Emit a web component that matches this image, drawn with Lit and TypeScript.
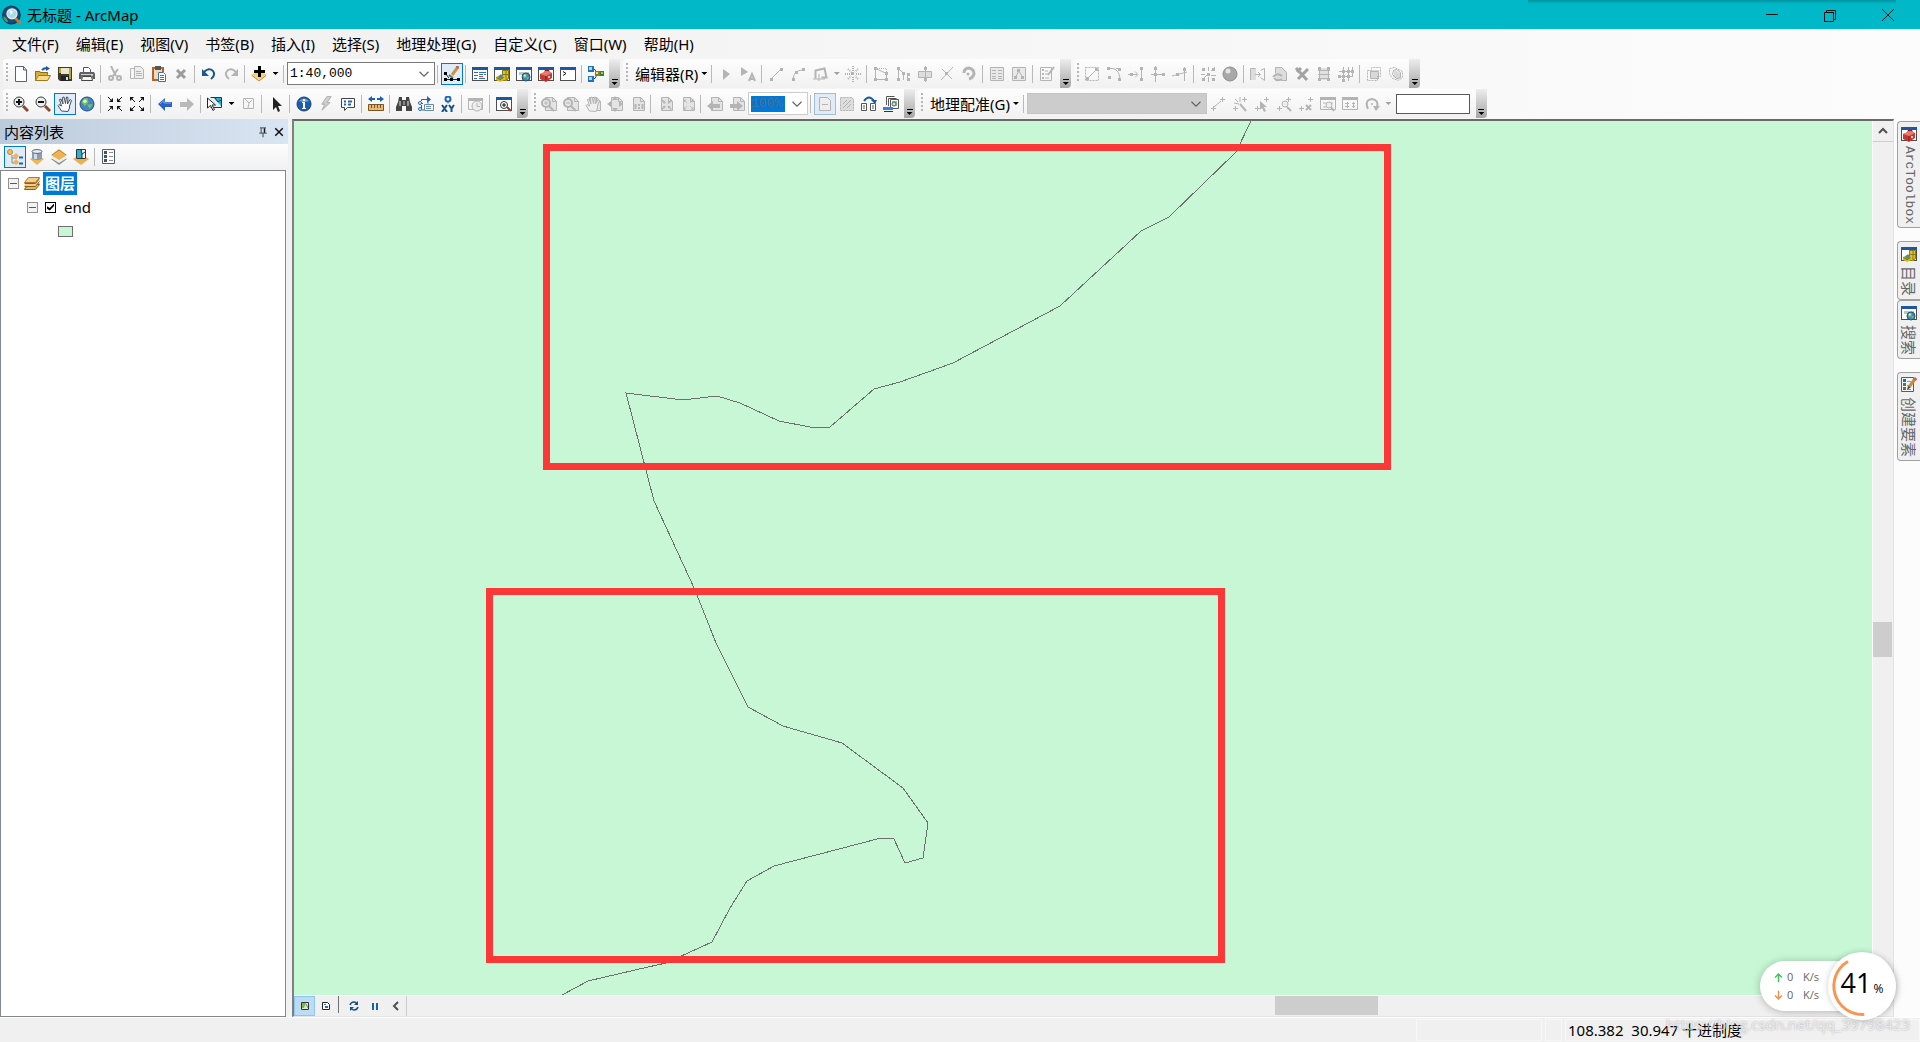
import { LitElement, html, svg, css, nothing } from "lit";
import { customElement, state } from "lit/decorators.js";
import { classMap } from "lit/directives/class-map.js";

/* ---------- icon drawing helpers ---------- */

const line = (d: string, color = "currentColor", width = 1) =>
  svg`<path d=${d} fill="none" stroke=${color} stroke-width=${width}></path>`;
const fill = (d: string, color = "currentColor") => svg`<path d=${d} fill=${color}></path>`;
const disc = (cx: number, cy: number, r: number, color = "currentColor", edge = "none", width = 1) =>
  svg`<circle cx=${cx} cy=${cy} r=${r} fill=${color} stroke=${edge} stroke-width=${width}></circle>`;
const nodes = (...pts: [number, number][]) =>
  fill(pts.map(([x, y]) => `M${x - 1} ${y - 1}h3v3h-3z`).join(""));
const frame = svg`${fill("M0 1h16v14H0z", "#4d4d4d")}${fill("M1 4h14v10H1z", "#fff")}${fill("M0 1h16v3H0z", "#1f55a5")}`;
const page = svg`${fill("M4 1h8l4 4v10H4z", "#e4e4e4")}${line("M4.5 1.5h7l4 4v9h-11zM11.5 1.5v4h4")}`;
const globe = (cx: number, cy: number, r: number) => svg`
  ${disc(cx, cy, r, "#3f86cf", "#1d4f7d")}
  ${fill(`M${cx - r * 0.8} ${cy - r * 0.2}q${r * 0.4} ${-r * 0.8} ${r * 0.9} ${-r * 0.6}l${r * 0.1} ${r * 0.6}l${-r * 0.5} ${r * 0.5}zM${cx} ${cy + r * 0.1}l${r * 0.8} ${-r * 0.1}l${-r * 0.4} ${r * 0.7}z`, "#7fc24a")}
  ${disc(cx - r * 0.3, cy - r * 0.4, r * 0.25, "#d8efd8")}`;
const toolbox = svg`${line("M7 6V4.5h4V6", "#8a1c16")}${fill("M2 8l7-3 5 2v5l-6 4-6-3z", "#c43a32")}${fill("M2 8l7-3 5 2-6 3z", "#e87a70")}${line("M8 10v5", "#8a1c16")}${fill("M10 10h2v2h-2z", "#f0c8c4")}`;
const cabinet = svg`${fill("M8 4h7v9l-3 2H8z", "#dcc32a")}${line("M8.5 4.5h6v8l-3 2h-3zM9 8.5h5M12 5v9", "#8d7a12")}${fill("M2 11l4-2 4 2v3l-4 2-4-2z", "#d2b81f")}${fill("M4 11l3-3 2 3-3 2z", "#3e8ab5")}${line("M2.5 11.5l3.5 2 3.5-2", "#7e6b08")}`;
const magnifier = (plus: boolean) => svg`
  ${line("M10 10l5 5", "#8a4a35", 3)}${disc(6, 6, 5, "#e9eef0", "#3d3d3d")}
  ${fill(plus ? "M5 3h2v2h2v2H7v2H5V7H3V5h2z" : "M3 5h6v2H3z", "#111")}`;
const grayLens = (plus: boolean) =>
  svg`${page}${disc(5, 7, 4, "#e8e8e8", "currentColor", 2)}${line("M8 10l5 5", "currentColor", 2)}${line(plus ? "M3 7h4M5 5v4" : "M3 7h4")}`;
const hand =
  "M4.5 15L1 9.5 2 8.5 4.5 10 2.5 3.5 4 3 6 8 5.5 1.5 7 1 8.5 7.5 9.5 1 11 1.5 10.5 8 13 3.5 14.5 4.5 12.5 10 12.5 12 11 15.5z";
const corners = "M1 1l5 5M15 1l-5 5M1 15l5-5M15 15l-5-5";
const inHeads = "M6 2v4H2zM10 2v4h4zM6 14v-4H2zM10 14v-4h4z";
const outHeads = "M1 1v4l4-4zM15 1v4l-4-4zM1 15v-4l4 4zM15 15v-4l-4 4z";
const pencil = svg`${line("M8 10l6-8", "#c58a3c", 3)}${line("M13.5 3l1.5-2", "#c9616b", 3)}${fill("M6 13l1-4 2.5 1.5z", "#444")}`;
const twoCrosses = "M1 12.5h5M3.5 10v5M10 3.5h5M12.5 1v5";

const icons: Record<string, unknown> = {
  create: svg`${fill("M2 0h9l3 4v12H2z", "#fdfeff")}${line("M2.5.5h8l3 3.5v11.5h-11zM10.5.5v3.5h3", "#56627a")}`,
  open: svg`${fill("M0 5h5l1 1h7v9H0z", "#d9a93b")}${line("M.5 14.5v-9h4l1 1h7v2", "#8c6a17")}${fill("M3 9h13l-3 6H0z", "#f7dc85")}${line("M3.5 9.5h12l-3 5H.5z", "#9c7820")}${line("M7 4q2-2 5-2", "#1f5d99", 2)}${fill("M11 0l4 2.5L11 5z", "#1f5d99")}`,
  save: svg`${fill("M1 1h14v14H3l-2-2z", "#3d3b28")}${fill("M2 2h2v5H2zM12 2h2v11h-2z", "#b5a642")}${fill("M4 2h8v6H4z", "#e9e6d0")}${fill("M4 10h8v5H4z", "#222")}${fill("M9 11h2v3H9z", "#ddd")}`,
  print: svg`${fill("M4 1h6l2 2v4H4z", "#fff")}${line("M4.5 7V1.5h5l2 2V7", "#555")}${fill("M1 6h14l1 2v5H0V8z", "#5d6165")}${fill("M2 8h12v1H2z", "#cfd3d6")}${fill("M3 10h10l1 5H2z", "#f6f6ee")}${line("M3.5 10.5h9l1 4h-11z", "#444")}${fill("M12 9h2v1h-2z", "#b7cf3a")}`,
  cut: svg`${line("M4 0l5 10M11 3L6 10", "currentColor", 2)}${disc(4, 12, 2, "none", "currentColor", 2)}${disc(12, 12, 2, "none", "currentColor", 2)}`,
  copy: svg`${line("M1.5 2.5h7l2 2v8h-9z")}${fill("M5 0h7l3 3v10H5z", "#eee")}${line("M5.5.5h6l3 3v9h-9zM7 5.5h5M7 7.5h6M7 9.5h6")}`,
  paste: svg`${fill("M1 1h12v14H1z", "#b5642f")}${fill("M3 3h8v10H3z", "#f3d9b5")}${fill("M4 0h6v4H4z", "#555")}${fill("M7 6h6l2 2v8H7z", "#fff")}${line("M7.5 6.5h5l2 2v7h-7zM9 9.5h4M9 11.5h4M9 13.5h4", "#3872b2")}`,
  remove: line("M4 4l8 8M12 4l-8 8", "#9c9c9c", 3),
  undo: svg`${line("M3 6q5-5 9-1 3 4-2 8", "#1c5795", 2)}${fill("M1 3v7h7z", "#1c5795")}`,
  redo: svg`${line("M13 6Q8 1 4 5q-3 4 2 8", "currentColor", 2)}${fill("M15 3v7H8z")}`,
  add: svg`${fill("M8 3l8 6-8 6-8-6z", "#f7cf85")}${line("M1 9.5l7 5.5 7-5.5", "#c48e3c")}${fill("M7 0h3v4h4v3h-4v4H7V7H3V4h4z", "#000")}`,
  editor: svg`${line("M1 13.5h14M1 7l4 5", "#222")}${line("M5 9l4 3", "#4d8076", 2)}${fill("M0 6h3v3H0zM0 12h3v3H0zM6 12h3v3H6zM13 12h3v3h-3z", "#000")}${line("M8 9l6-8", "#d29243", 3)}${line("M13 2l1-2", "#c45e66", 3)}`,
  toc: svg`${frame}${line("M2 6.5h4M2 9.5h4M2 12.5h3M7 6.5h7M7 8.5h4M7 12.5h6", "#2b6fbd")}${line("M7 10.5h4", "#d23c2a")}${line("M12 8.5h2", "#2f9a45")}`,
  catalog: svg`${frame}${cabinet}`,
  search: svg`${frame}${fill("M3 6h10v3H3z", "#b9c4d6")}${globe(10, 11, 4)}`,
  toolbox: svg`${frame}${toolbox}`,
  python: svg`${frame}${line("M3 5.5l3 2-3 2", "#111")}`,
  model: svg`${line("M5 3.5h2l2 4M5 12.5h2l2-4", "#1f5d99")}${line("M9 8h3", "#444")}${fill("M0 0h6v6H0zM0 10h6v6H0z", "#2272b8")}${fill("M1 1h3v3H1zM1 11h3v3H1z", "#a8d8f5")}${fill("M7 5h5v5H7z", "#927b1c")}${fill("M8 6h2v2H8z", "#f2de68")}${fill("M12 5h4v5h-4z", "#3c7f2b")}${fill("M13 6h2v2h-2z", "#8ed16d")}`,
  pointer: fill("M5 3v11l7-6z"),
  pointerA: svg`${fill("M1 1v9l7-4z")}${line("M9 15l3-7 3 7M10 13h4", "currentColor", 2)}`,
  segment: svg`${line("M3 13L13 3")}${nodes([3, 13], [13, 3])}`,
  arc: svg`${line("M3 13Q4 4 13 4")}${nodes([3, 13], [6, 6], [13, 3])}`,
  trace: svg`${line("M3.5 12.5v-8l9-2 2 9h-5", "currentColor", 2)}${line("M1 13h12M7 8v7")}`,
  burst: svg`<g stroke-dasharray="1 1">${line("M8 0v6M8 11v5M0 8h6M11 8h5M3 3l3 3M13 3l-3 3M3 13l3-3M13 13l-3-3", "currentColor", 2)}</g>${nodes([7, 7])}`,
  edges: svg`${line("M2.5 2.5v11h11v-6z")}<g stroke-dasharray="1 1">${line("M4 2.5h9.5v5")}</g>${nodes([2, 2], [13, 7], [2, 13], [13, 13])}`,
  reshape: svg`${line("M3.5 2v13M3.5 3l5 4v7M12.5 8v7")}${nodes([3, 13], [3, 2], [8, 7], [13, 8], [13, 13])}`,
  split: svg`${fill("M1 5h14v7H1z", "#dedede")}${line("M1.5 5.5h13v6h-13zM8.5 0v16")}${nodes([8, 2], [8, 13])}`,
  cross: svg`${line("M2 14L14 1M3 3l10 10")}${nodes([7, 7])}`,
  rotate: svg`${line("M3 7q0-5 5-5 5 1 5 6-1 4-5 5", "currentColor", 3)}${disc(7, 8, 1.5)}`,
  table: svg`${fill("M2 1h12v14H2z", "#e9e9e9")}${line("M1.5 1.5h13v13h-13zM3 4.5h4M9 4.5h4M3 7.5h4M9 7.5h4M3 10.5h4M9 10.5h4M3 12.5h4M9 12.5h4")}`,
  sketch: svg`${fill("M2 1h12v14H2z", "#e9e9e9")}${line("M1.5 1.5h13v13h-13zM4 12l4-7 4 7")}${nodes([4, 11], [7, 4], [11, 11])}`,
  template: svg`${line("M1.5 1.5h11v13h-11zM6 5h3M6 8h3M6 12h4")}${fill("M3 3h2v2H3zM3 7h2v2H3zM3 11h2v2H3z")}${line("M9 9l6-8", "currentColor", 2)}`,
  topoA: svg`<path d="M1.5 1.5h13v13h-13z" fill="none" stroke="currentColor" stroke-dasharray="2 1"></path>${line("M4 12l8-8")}${nodes([3, 12], [12, 3])}`,
  topoB: svg`${line("M1 2.5h6q7 2 7 12M10 2.5h5")}${nodes([2, 2], [13, 3], [13, 13], [3, 11])}`,
  topoC: svg`${line("M0 8.5h9M13.5 1v14M7 5.5l3 3-3 3")}${nodes([3, 8], [13, 2], [13, 13])}`,
  topoD: svg`${line("M5.5 0v16M1 8.5h14")}${nodes([5, 8], [5, 2], [13, 8])}`,
  topoE: svg`${line("M0 10L15 6M12.5 1v14")}${nodes([5, 8], [12, 3])}`,
  explode: svg`${line("M8.5 1v4M1 8.5h4M11 9.5h5M8.5 11v5M3 13l5-5M11 5l4-4")}${nodes([3, 3], [8, 8], [13, 13], [13, 3], [3, 13])}`,
  ball: svg`${disc(8, 8, 7, "#a8a8a8", "#8f8f8f")}${disc(6, 5, 2.5, "#e4e4e4")}`,
  align: svg`${fill("M1 2h5v12H1z", "#ddd")}${line("M.5 14V2.5h5M5 8.5h5M8 6l2.5 2.5L8 11M10.5 4.5l4-2v12l-4-3")}`,
  replace: svg`${fill("M3 1h7l5 5v9H3z", "#ddd")}${line("M3.5 7V1.5h6l5 5v8h-5")}${line("M1 11q4-5 9-1M10 13q-5 3-8-1", "currentColor", 2)}`,
  fixtool: svg`${line("M2 2l11 12M4 13L14 3M3 6l4-4", "#a2a2a2", 3)}`,
  box: svg`${fill("M3 2h10v12H3z", "#e0e0e0")}${line("M3.5 1v14M12.5 1v14M2 4.5h12M2 8.5h12M2 12.5h12")}${nodes([3, 2], [12, 2], [3, 13], [12, 13])}`,
  grid: svg`${line("M5.5 1v14M10.5 1v14M14.5 1v10M1 5.5h14M1 10.5h14")}${nodes([5, 5], [10, 5], [14, 5], [1, 10], [5, 10], [10, 10], [5, 14])}`,
  mergeA: svg`${fill("M4 4h9v9H4z", "#d8d8d8")}<path d="M1.5 4.5h4v-3h9v9h-3v4h-10z" fill="none" stroke="currentColor" stroke-dasharray="2 1"></path>${line("M4.5 5.5h8v7h-8z")}`,
  mergeB: svg`${fill("M7 4l6 4-2 6-6-3z", "#d8d8d8")}<path d="M1.5 2.5l5-1 8 4v6l-4 3-6-2-3-5z" fill="none" stroke="currentColor" stroke-dasharray="2 1"></path>${line("M5.5 4.5l3-1 4 3v5l-4 1-4-4z")}`,

  zoomin: magnifier(true),
  zoomout: magnifier(false),
  hand: svg`${fill(hand, "#fff")}${line(hand, "#44505c")}`,
  globe: globe(8, 8, 7),
  fixin: svg`${line(corners, "#111")}${fill(inHeads, "#111")}`,
  fixout: svg`${line(corners, "#111")}${fill(outHeads, "#111")}`,
  back: svg`${fill("M1 8l7-6v4h7v5H8v4z", "#2b63c4")}${line("M3 8l4-3.5V7h7", "#7fa9ea")}`,
  forward: fill("M15 8L8 2v4H1v5h7v4z", "#b9b9b9"),
  select: svg`${fill("M3 2h12v10H3z", "#e4eef0")}${line("M3.5 1.5h11v10h-11", "#333")}${fill("M7 2h7v8z", "#28b5d6")}${line("M8 2l3 4 3-2", "#333")}${fill("M0 1v12l3-3 3 5 2-1-3-5h4z", "#fff")}${line("M.5 2v10l3-2.5 2.5 5 1.5-1-2.5-4.5h3.5z", "#222")}`,
  clear: svg`${line("M3.5 2.5h10v10h-10zM5 3l4 4 3-3M9 7l-1 5")}`,
  arrow: fill("M5 1v13l3-3 2 5 2-1-2-5h4z", "#222"),
  info: svg`${disc(8, 8, 7, "#1d5fae", "#13427d")}${fill("M3 5q5-5 10 0-5 2-10 0z", "#6fa4e0")}${fill("M7 3h2v2H7zM6 6h3v6h1v1H6v-1h1V7H6z", "#fff")}`,
  bolt: svg`${fill("M9 0h5l-4 6h3L3 16l3-7H3z", "#cfcfcf")}${line("M9 .5h4l-4 6h3L4 14l3-6H4z")}`,
  popup: svg`${fill("M1 2h14v9H8l-3 4v-4H1z", "#fff")}${line("M1.5 2.5h13v9h-7l-3 3v-3h-3z", "#444")}${line("M4 5.5h2M4 8.5h2M8 5.5h4M8 8.5h3", "#1f66b0", 2)}`,
  measure: svg`${fill("M0 3l4-3v2h3v2H4v2zM16 3l-4-3v2H9v2h3v2z", "#1d5fa8")}${fill("M0 8h16v7H0z", "#e0b87a")}${line("M.5 8.5h15v6H.5zM3.5 9v3M6.5 9v3M9.5 9v3M12.5 9v3", "#7d5522")}`,
  find: svg`${fill("M3 1h3v3h4V1h3l1 5 2 5v4h-6v-5H6v5H0v-4l2-5z", "#444")}${fill("M3 5h2v5H3zM11 5h2v5h-2z", "#999")}${fill("M7 5h2v4H7z", "#888")}`,
  route: svg`${line("M2 7.5h3M3.5 5V3.5h6M3.5 9v5h3", "#1f66b0")}${fill("M9 0l4 3.5L9 7z", "#1f66b0")}${disc(2, 7, 1.5, "#fff", "#1f66b0")}${disc(2, 13, 1.5, "#fff", "#1f66b0")}${fill("M6 8h10v7H6z", "#eef5fb")}${line("M6.5 8.5h9v6h-9zM10 6v2M8 10.5h5M8 12.5h5", "#6b8bab")}`,
  xy: svg`${disc(8, 3, 2.5, "#fff", "#1f66b0", 2)}${line("M8 5.5v2", "#1f66b0")}${line("M2 9l5 7M7 9l-5 7M9 9l2.5 3.5L14 9M11.5 12v4", "#174f8c", 2)}`,
  time: svg`${line("M.5 3.5h14v10H.5z")}${fill("M0 2h15v3H0z")}${disc(9, 10, 5, "#eee", "currentColor")}${line("M9 7v3.5h3")}`,
  viewer: svg`${frame}${line("M11 11l4 4", "#8a4a35", 2)}${disc(8, 9, 3.5, "#fff", "#333")}${line("M6 9h4M8 7v4", "#111")}`,

  pgin: grayLens(true),
  pgout: grayLens(false),
  pghand: svg`${page}${fill(hand, "#eee")}${line(hand)}`,
  pgfull: svg`${page}${fill("M8 0l3 4H5zM8 16l3-4H5zM0 8l4-3v6zM16 8l-4-3v6z")}`,
  pgone: svg`${page}${line("M6.5 8v5M13.5 8v5", "currentColor", 2)}${fill("M9 8h2v2H9zM9 11h2v2H9z")}`,
  pgfixin: svg`${page}<g transform="translate(4 3) scale(.7)">${line(corners, "currentColor", 2)}${fill(inHeads)}</g>`,
  pgfixout: svg`${page}<g transform="translate(4 3) scale(.7)">${line(corners)}${fill(outHeads)}</g>`,
  pgback: svg`${page}${fill("M0 10l6-5v3h7v4H6v3z")}`,
  pgnext: svg`${page}${fill("M14 10L8 5v3H1v4h7v3z")}`,
  pgdraft: svg`${fill("M2 1h9l3 3v11H2z", "#eee")}${line("M2.5 1.5h8l3 3v10h-11zM5 8.5h6")}`,
  pgfocus: svg`${fill("M1 1h12l2 2v12H1z", "#ddd")}<path d="M1.5 1.5h11l2 2v11h-13z" fill="none" stroke="currentColor" stroke-dasharray="2 1"></path>${line("M4 12l8-8M4 8l4-4M8 12l4-4")}`,
  pgchange: svg`${line("M3 5q5-7 10 0", "#1f5d99", 2)}${fill("M10 4h6l-2 4z", "#1f5d99")}${fill("M0 7h6v8H0zM9 7h6v8H9z", "#fff")}${line("M.5 7.5h5v7h-5zM9.5 7.5h5v7h-5zM2 10h2M11 10h2M2 12h2M11 12h2", "#555")}`,
  pgdriven: svg`${fill("M4 0h9v9H4z", "#fff")}${line("M3.5 9V.5h8M5.5 10V2.5h8M7.5 3.5h8v9h-8z", "#555")}${fill("M9 5h5v5H9z", "#90b880")}${disc(11, 8, 2, "#ddd", "#4b6b84")}${fill("M0 11h10v3H0z", "#3b82d0")}${line("M1 15.5h9", "#333")}`,

  ctlA: svg`${line(twoCrosses)}${line("M4 11l7-6")}`,
  ctlB: svg`${line(twoCrosses)}${line("M8 8l6 7", "currentColor", 2)}${line("M3 3l3 3M8 1v5M2 7l5 1")}`,
  ctlC: svg`${line(twoCrosses)}${fill("M6 5v9l2-2 2 4 2-1-2-4h3z")}`,
  ctlD: svg`${line(twoCrosses)}${disc(9, 8, 3, "#eee", "currentColor")}${line("M11 11l4 4", "currentColor", 2)}`,
  ctlE: svg`${line(twoCrosses)}${line("M8 9l5 5M13 9l-5 5", "currentColor", 2)}`,
  ctlF: svg`${line("M.5 1.5h15v12H.5z")}${fill("M0 1h16v3H0z")}${line("M3 7h3M10 7h3M3 11h3")}${disc(9, 9, 3, "#eee", "currentColor")}${line("M11 11l3 4", "currentColor", 2)}`,
  ctlG: svg`${line("M.5 1.5h15v12H.5z")}${fill("M0 1h16v3H0z")}${line("M3 7.5h4M10 7.5h3M3 10.5h4M10 10.5h3M5.5 6v6M11.5 6v6")}`,
  ctlH: svg`${line("M4 13Q0 4 8 3q7 1 5 8", "currentColor", 2)}${fill("M9 10h7l-4 5z")}${disc(8, 8, 1)}`,

  listDraw: svg`${line("M5 6v8h6M5 9h5", "#8c8c8c")}${line("M12 8.5h4M12 14.5h4", "#1f66b0", 2)}${disc(3, 3, 2.5, "#eebb62", "#c08a35")}${fill("M9 4l3 3-3 3-3-3zM9 10l3 3-3 3-3-3z", "#e9b45a")}`,
  listSource: svg`${fill("M8 6l7 4-7 6-7-6z", "#eab95a")}${fill("M3 2h10v8q-5 2-10 0z", "#8c9bb0")}${fill("M5 3h3v7H5z", "#d4dce6")}<ellipse cx="8" cy="2.5" rx="5" ry="2" fill="#e5eaf0" stroke="#5e6b7d"></ellipse>`,
  listVisible: svg`${fill("M8 5l8 5-8 6-8-6z", "#8f8f8f")}${fill("M8 3l8 6-8 5-8-5z", "#eee")}${fill("M8 0l8 6-8 5-8-5z", "#ebb354")}${line("M1 6l7-5 7 5", "#c08a35")}`,
  listSelect: svg`${fill("M8 5l8 5-8 6-8-6z", "#e8b154")}${fill("M3 0h10v10H3z", "#eef4f4")}${line("M3.5.5h9v9h-9z", "#333")}${fill("M4 1h5v8H4z", "#24b4d4")}${line("M8 1l1 4 3-2M9 5v4", "#333")}`,
  options: svg`${fill("M2 1h12v14H2z", "#fff")}${line("M1.5.5h12v14h-12z", "#4b5f78")}${fill("M3 2h3v3H3zM3 6h3v3H3zM3 10h3v3H3z", "#4b5159")}${line("M8 3.5h4M8 7.5h4M8 11.5h4", "#8a8f96")}`,
  layers: svg`${fill("M4 8h12l-4 6H0z", "#e3b568")}${line("M4.5 9.5h11l-4 5H.5z", "#8f5e1d")}${fill("M4 5h12l-4 6H0z", "#f0cd8c")}${line("M.5 11.5h11l4-5", "#8f5e1d")}${fill("M4 2h12l-4 6H0z", "#f3cf8d")}${line("M4.5 2.5h11l-4 5H.5z", "#b07a32")}${line("M.5 8.5h11l4-5", "#8f5e1d")}`,
  createFeature: svg`${fill("M1 1h12v14H1z", "#eef6fc")}${line("M.5.5h12v14H.5z", "#39658f")}${fill("M2 2h3v3H2z", "#2a69ad")}${fill("M2 6h3v3H2z", "#40872f")}${fill("M2 10h3v3H2z", "#b3541e")}${line("M6 4.5h4M6 8.5h2M6 12.5h4", "#89a")}${pencil}`,

  dataView: svg`${fill("M4 4h8v8H4z", "#dcebc2")}${line("M4.5 4.5h7v7h-7z", "#333")}${fill("M5 5h4l-2 5H5z", "#87b23f")}${line("M9 6l2 4", "#4b86b8")}`,
  layoutView: svg`${fill("M5 4h5l2 2v7H5z", "#fff")}${line("M4.5 4.5h5l2 2v5h-7z", "#222")}${fill("M6 6h2v1H6zM7 8h3v2H7z", "#2a6fb0")}`,
  refresh: svg`${line("M4 7q1-3 4-3 2 0 3 2M12 9q-1 3-4 3-2 0-3-2", "#164f86", 1.5)}${fill("M12 3v4H8zM4 13V9h4z", "#164f86")}`,
  pause: fill("M5 5h2v7H5zM9 5h2v7H9z", "#1b5fae"),
  chevLeft: line("M10 4L6 8l4 4", "#505050", 2),
  chevUp: line("M4 10l4-4 4 4", "#505050", 2),
  chevDown: line("M2 5l6 6 6-6", "#606060", 1.5),
  pin: svg`${line("M4 2.5h8M5.5 3v6M3 9.5h10M8 10v5", "#111")}${line("M10 3v6", "#111", 2)}`,
  close: line("M3 3l10 10M13 3L3 13", "#111", 2),
  winMin: line("M2 7.5h12", "#111"),
  winMax: line("M2.5 5.5h9v9h-9zM4.5 5V3.5h9v9H12", "#111"),
  winClose: line("M2 2l12 12M14 2L2 14", "#111"),
  up: line("M8 15V3M3 8l5-5 5 5", "#3fbf55", 2),
  down: line("M8 1v12M3 8l5 5 5-5", "#f58f45", 2),
  app: svg`${disc(7.5, 8, 7, "#1d4a78", "#12395e")}${fill("M1 9q3 1 4 5-4-1-4-5z", "#4fa05a")}${line("M10 10l5 5", "#c07c3f", 2)}${disc(8, 7, 4, "#a9dce4", "#dfeff1")}${fill("M6 4l3 1-2 3z", "#fff")}`,
};

const icon = (name: string) =>
  html`<svg class="ic" viewBox="0 0 16 16" aria-hidden="true">${icons[name] ?? nothing}</svg>`;

/* ---------- toolbar data ---------- */

interface Tool {
  kind: "tool" | "sep" | "label" | "scale" | "percent" | "raster" | "angle";
  name?: string;
  off?: boolean;
  on?: boolean;
  drop?: boolean;
  text?: string;
}

const sep: Tool = { kind: "sep" };
const on = (s: string): Tool[] =>
  s.split(" ").map((raw) => {
    if (raw === "|") return sep;
    const drop = raw.endsWith("+");
    const active = raw.endsWith("*");
    return { kind: "tool", name: raw.replace(/[+*]$/, ""), drop, on: active };
  });
const off = (s: string): Tool[] => on(s).map((t) => (t.kind === "sep" ? t : { ...t, off: true }));
const label = (text: string): Tool => ({ kind: "label", text });

const ROW_ONE: { name: string; tools: Tool[] }[] = [
  {
    name: "标准工具",
    tools: [
      ...on("create open save print |"), ...off("cut copy"), ...on("paste"), ...off("remove"), ...on("| undo"),
      ...off("redo"), ...on("| add+ |"), { kind: "scale" }, ...on("| editor* | toc catalog search toolbox python | model"),
    ],
  },
  {
    name: "编辑器",
    tools: [
      label("编辑器(R)"),
      ...off("| pointer pointerA | segment arc trace+ burst | edges reshape split cross rotate | table sketch | template"),
    ],
  },
  {
    name: "高级编辑",
    tools: off("topoA topoB topoC topoD topoE | explode ball | align replace fixtool box grid | mergeA mergeB"),
  },
];

const ROW_TWO: { name: string; tools: Tool[] }[] = [
  {
    name: "工具",
    tools: [
      ...on("zoomin zoomout hand* globe | fixin fixout | back"), ...off("forward"), ...on("| select+"), ...off("clear"),
      ...on("| arrow | info"), ...off("bolt"), ...on("popup | measure | find route xy |"), ...off("time"), ...on("| viewer"),
    ],
  },
  {
    name: "布局",
    tools: [
      ...off("pgin pgout pghand pgfull pgone | pgfixin pgfixout | pgback pgnext"),
      { kind: "percent" }, sep, ...off("pgdraft* pgfocus"), ...on("pgchange pgdriven"),
    ],
  },
  {
    name: "地理配准",
    tools: [
      label("地理配准(G)"), sep, { kind: "raster" },
      ...off("ctlA ctlB ctlC ctlD ctlE ctlF ctlG ctlH+"), { kind: "angle" },
    ],
  },
];

const MENUS = ["文件(F)", "编辑(E)", "视图(V)", "书签(B)", "插入(I)", "选择(S)", "地理处理(G)", "自定义(C)", "窗口(W)", "帮助(H)"];

const DOCK = [
  [{ name: "toolbox", text: "ArcToolbox" }],
  [{ name: "catalog", text: "目录" }, { name: "search", text: "搜索" }],
  [{ name: "createFeature", text: "创建要素" }],
];

/* Boundary of the "end" layer, in window pixels. */
const BOUNDARY =
  "1251,121 1236,152 1169,217 1141,231 1060,306 953,363 900,382 874,389 830,427 815,428 779,421 740,403 717,396 683,400 626,393 " +
  "654,501 695,590 716,643 748,707 783,726 842,743 903,788 928,823 923,858 905,863 894,839 881,838 774,866 747,881 " +
  "730,908 712,942 666,963 648,967 588,981 562,995";

@customElement("app-root")
export class AppRoot extends LitElement {
  @state() private layerVisible = true;

  static styles = css`
    :host {
      display: flex;
      flex-direction: column;
      height: 100vh;
      overflow: hidden;
      background: linear-gradient(90deg, #f0f0f0, #fcfcfc);
      color: #000;
      font: 15px/20px "Noto Sans", "Noto Sans CJK SC", sans-serif;
    }
    * { box-sizing: border-box; }
    button, input, select {
      margin: 0;
      padding: 0;
      border: 0;
      border-radius: 0;
      background: none;
      color: inherit;
      font: inherit;
    }
    .ic { display: block; flex: none; width: 16px; height: 16px; }

    .title {
      display: flex;
      align-items: center;
      flex: none;
      height: 29px;
      padding: 0 3px 0 2px;
      background: #00b8c7;
    }
    .title > .ic { width: 20px; height: 20px; }
    .title h1 { flex: 1; margin: 0 0 0 5px; font: inherit; }
    .win { display: grid; place-items: center; width: 58px; height: 28px; }
    .win .ic { width: 16px; height: 16px; }
    .shade {
      position: absolute;
      top: 0;
      right: 24px;
      width: 368px;
      height: 4px;
      background: linear-gradient(#00939f, #00b8c700);
    }

    .menu { display: flex; flex: none; gap: 1px; height: 30px; padding: 0 4px; }
    .menu button { padding: 0 8px; }

    .row { display: flex; flex: none; gap: 3px; height: 30px; padding: 0 3px; }
    .bar {
      display: flex;
      align-items: center;
      height: 29px;
      padding-left: 7px;
      border-radius: 4px 0 0 4px;
      background:
        repeating-linear-gradient(#b5b5b5 0 2px, #b5b5b500 2px 4px) 3px 4px / 2px 20px no-repeat,
        linear-gradient(#fdfdfd, #f1f1f1);
    }
    .tool { display: grid; place-items: center; width: 22px; height: 22px; }
    .tool.drop { grid-template-columns: 22px 11px; width: 33px; }
    .tool.on { border: 1px solid #0078d7; background: #dfebf6; }
    .tool.off { color: #b4b4b4; }
    .tool.on.off { border-color: #a3bdd6; }
    .caret {
      width: 6px;
      height: 3px;
      background: #000;
      clip-path: polygon(0 0, 100% 0, 50% 100%);
    }
    .off .caret { background: #a0a0a0; }
    .sep { flex: none; width: 1px; height: 18px; margin: 0 3px 0 2px; background: #b9b9b9; }
    .label { display: flex; align-items: center; gap: 3px; padding: 0 2px 0 5px; white-space: nowrap; }
    .more {
      display: flex;
      flex-direction: column;
      align-items: center;
      justify-content: flex-end;
      gap: 2px;
      width: 11px;
      height: 29px;
      margin-left: 2px;
      padding-bottom: 3px;
      border-radius: 0 0 4px 0;
      background: linear-gradient(#ededed, #a6a6a6);
    }
    .more::before { content: ""; width: 6px; height: 1px; background: #000; }

    .combo { display: grid; align-items: center; height: 23px; border: 1px solid #7a7a7a; background: #fff; }
    .combo > * { grid-area: 1 / 1; }
    .combo select {
      width: 100%;
      height: 100%;
      padding-left: 2px;
      appearance: none;
      opacity: 1;
      font: 13px/20px "Liberation Mono", monospace;
    }
    .combo .ic { justify-self: end; width: 12px; height: 12px; margin-right: 4px; pointer-events: none; }
    .scale { width: 148px; }
    .percent { width: 60px; border-color: #ccc; }
    .percent select {
      width: 34px;
      height: 16px;
      margin-left: 2px;
      padding: 0;
      background: #0078d7;
      color: #4d6f92;
      line-height: 16px;
    }
    .raster { width: 180px; height: 21px; border-color: #c4c4c4; background: #cccccc; }
    .angle { width: 74px; height: 20px; margin: 0 4px 0 2px; padding: 0 4px; border: 1px solid #5a5a5a; background: #fff; }

    .work { display: flex; flex: 1; min-height: 0; }

    .contents { display: flex; flex-direction: column; flex: none; width: 288px; margin-right: 4px; }
    .contents header {
      display: flex;
      align-items: center;
      height: 25px;
      padding: 0 1px 0 4px;
      background: linear-gradient(90deg, #bccbdb, #d8e5f3);
    }
    .contents h2 { flex: 1; margin: 0; font: inherit; }
    .contents header button { display: grid; place-items: center; width: 16px; height: 16px; }
    .contents header .ic { width: 12px; height: 12px; }
    .listbar { display: flex; align-items: center; height: 26px; padding-left: 4px; background: linear-gradient(#fdfdfd, #f1f1f1); }
    .tree {
      flex: 1;
      margin: 0 2px 0 0;
      padding: 0 0 0 7px;
      border: 1px solid #828790;
      background: #fff;
      list-style: none;
    }
    .tree ul { margin: 0; padding: 0 0 0 19px; list-style: none; }
    .node { display: flex; align-items: center; height: 24px; }
    .fold {
      width: 11px;
      height: 11px;
      border: 1px solid #919191;
      background: linear-gradient(#3b5aa0, #3b5aa0) 50% 50% / 7px 1px no-repeat, #f3f3f3;
    }
    .node .ic { margin: 0 3px 0 5px; }
    .chosen { padding: 0 2px; background: #0078d7; color: #fff; line-height: 23px; }
    .node label { display: flex; align-items: center; gap: 8px; margin-left: 7px; }
    .node input { display: grid; place-items: center; width: 11px; height: 11px; border: 1px solid #000; appearance: none; }
    .node input:checked::before {
      content: "";
      width: 7px;
      height: 7px;
      background: #000;
      clip-path: polygon(0 40%, 40% 65%, 100% 0, 100% 35%, 40% 100%, 0 75%);
    }
    .swatch { width: 15px; height: 11px; margin-left: 31px; border: 1px solid #6e6e6e; background: #c7f7d4; }

    .view {
      display: grid;
      grid-template: minmax(0, 1fr) 20px / minmax(0, 1fr) 20px;
      flex: 1;
      min-width: 0;
      border: solid;
      border-width: 2px 1px 1px 2px;
      border-color: #696969 #e3e3e3 #e3e3e3 #808080;
      background: #f0f0f0;
    }
    .map {
      display: block;
      width: 100%;
      height: 100%;
      border: solid #fff;
      border-width: 0 1px 1px 0;
      background: #c7f7d4;
    }
    .boundary { fill: none; stroke: #6e6e6e; shape-rendering: crispEdges; }
    .mark { fill: none; stroke: #fb3737; stroke-width: 7; }
    .vscroll { display: grid; grid-template-rows: 21px minmax(0, 1fr); }
    .vscroll button { display: grid; place-items: center; border-bottom: 1px solid #cdcdcd; }
    .track { display: flex; flex-direction: column; padding-right: 1px; }
    .track::before { content: ""; flex: 479; }
    .track::after { content: ""; flex: 338; }
    .thumb { flex: 35; background: #cdcdcd; }
    .hscroll { display: flex; align-items: stretch; grid-column: 1 / 3; }
    .hscroll button { display: grid; place-items: center; width: 21px; border: 1px solid #f0f0f0; }
    .hscroll button.on { border-color: #8cc6f5; background: #bcdcf4; }
    .rule { width: 1px; height: 17px; margin: 0 4px 0 2px; background: #707070; }
    .htrack { display: flex; flex: 1; border-left: 1px solid #cdcdcd; padding-bottom: 1px; }
    .htrack::before { content: ""; flex: 868; }
    .htrack::after { content: ""; flex: 515; }
    .htrack .thumb { flex: 103; }

    .dock { display: flex; flex-direction: column; gap: 13px; flex: none; width: 25px; margin-left: 1px; padding: 2px 0 0 2px; background: #fcfcfc; }
    .tabs { display: flex; flex-direction: column; }
    .tab {
      display: flex;
      align-items: center;
      justify-content: flex-start;
      gap: 4px;
      padding: 4px 3px 3px 3px;
      border: 1px solid #a0a0a0;
      border-right: 0;
      border-radius: 4px 0 0 4px;
      background: #f0f0f0;
      color: #666;
      writing-mode: vertical-rl;
      text-orientation: sideways;
      font: 15px/16px "Noto Sans CJK SC", sans-serif;
      white-space: nowrap;
    }
    .tab.latin { font: 13px/16px "Liberation Mono", monospace; }

    .status {
      display: flex;
      align-items: center;
      justify-content: flex-end;
      flex: none;
      gap: 3px;
      height: 25px;
      border-top: 1px solid #fff;
      background: #f0f0f0;
    }
    .cell { height: 22px; border: 1px solid #f7f7f7; }
    .cell.wide { width: 126px; }
    .cell.slim { width: 17px; }
    .cell.coords { width: 355px; padding-left: 2px; white-space: pre; }

    .watermark {
      position: absolute;
      right: 10px;
      bottom: 7px;
      color: #ffffffaa;
      font: 15px/22px "Open Sans", sans-serif;
      text-shadow: 0 0 2px #00000055;
    }
    .meter {
      position: absolute;
      right: 24px;
      bottom: 22px;
      display: flex;
      align-items: center;
      height: 68px;
    }
    .rates {
      display: grid;
      align-content: center;
      height: 50px;
      width: 136px;
      margin-right: -68px;
      padding-left: 13px;
      border-radius: 25px;
      background: #fff;
      box-shadow: 0 1px 8px #00000040;
      color: #666;
      font: 11px/18px "Open Sans", sans-serif;
    }
    .rate { display: grid; grid-template-columns: 14px 16px auto; align-items: center; }
    .rate .ic { width: 11px; height: 11px; }
    .load {
      display: grid;
      place-items: center;
      width: 68px;
      height: 68px;
      border-radius: 50%;
      background: #fff;
      box-shadow: 0 0 6px #00000033;
      color: #000;
    }
    .load > * { grid-area: 1 / 1; }
    .load svg { width: 68px; height: 68px; }
    .load span { display: flex; align-items: baseline; gap: 2px; font: 27px/30px "Open Sans", sans-serif; }
    .load small { font-size: 12px; }
  `;

  private tool(t: Tool) {
    switch (t.kind) {
      case "sep":
        return html`<span class="sep"></span>`;
      case "label":
        return html`<button class="label">${t.text}<span class="caret"></span></button>`;
      case "scale":
        return html`<span class="combo scale"><select aria-label="比例"><option>1:40,000</option></select>${icon("chevDown")}</span>`;
      case "percent":
        return html`<span class="combo percent off"><select aria-label="缩放" disabled><option>100%</option></select>${icon("chevDown")}</span>`;
      case "raster":
        return html`<span class="combo raster"><select aria-label="图层" disabled><option></option></select>${icon("chevDown")}</span>`;
      case "angle":
        return html`<input class="angle" type="text" aria-label="旋转角度" />`;
      default:
        return html`<button
          class=${classMap({ tool: true, on: !!t.on, off: !!t.off, drop: !!t.drop })}
          aria-label=${t.name ?? ""}
          ?disabled=${!!t.off}
        >${icon(t.name ?? "")}${t.drop ? html`<span class="caret"></span>` : nothing}</button>`;
    }
  }

  private bars(list: { name: string; tools: Tool[] }[]) {
    return html`<div class="row">
      ${list.map(
        (b) => html`<div class="bar" role="toolbar" aria-label=${b.name}>
          ${b.tools.map((t) => this.tool(t))}
          <button class="more" aria-label="更多"><span class="caret"></span></button>
        </div>`
      )}
    </div>`;
  }

  render() {
    return html`
      <div class="title">
        ${icon("app")}
        <h1>无标题 - ArcMap</h1>
        <button class="win" aria-label="最小化">${icon("winMin")}</button>
        <button class="win" aria-label="还原">${icon("winMax")}</button>
        <button class="win" aria-label="关闭">${icon("winClose")}</button>
        <span class="shade"></span>
      </div>
      <nav class="menu">${MENUS.map((m) => html`<button>${m}</button>`)}</nav>
      ${this.bars(ROW_ONE)} ${this.bars(ROW_TWO)}

      <div class="work">
        <section class="contents">
          <header>
            <h2>内容列表</h2>
            <button aria-label="自动隐藏">${icon("pin")}</button>
            <button aria-label="关闭">${icon("close")}</button>
          </header>
          <div class="listbar">${on("listDraw* listSource listVisible listSelect | options").map((t) => this.tool(t))}</div>
          <ul class="tree">
            <li>
              <div class="node"><button class="fold" aria-label="折叠"></button>${icon("layers")}<b class="chosen">图层</b></div>
              <ul>
                <li>
                  <div class="node">
                    <button class="fold" aria-label="折叠"></button>
                    <label
                      ><input
                        type="checkbox"
                        .checked=${this.layerVisible}
                        @change=${(e: Event) => (this.layerVisible = (e.target as HTMLInputElement).checked)}
                      />end</label
                    >
                  </div>
                  <div class="node"><span class="swatch"></span></div>
                </li>
              </ul>
            </li>
          </ul>
        </section>

        <main class="view">
          <svg class="map" viewBox="294 121 1578 874" preserveAspectRatio="xMinYMin slice" role="img" aria-label="end">
            ${this.layerVisible ? svg`<polyline class="boundary" points=${BOUNDARY}></polyline>` : nothing}
            <rect class="mark" x="546.5" y="147.5" width="841" height="319"></rect>
            <rect class="mark" x="489.5" y="591.5" width="732" height="368"></rect>
          </svg>
          <div class="vscroll">
            <button aria-label="向上滚动">${icon("chevUp")}</button>
            <div class="track"><div class="thumb"></div></div>
          </div>
          <div class="hscroll">
            <button class="on" aria-label="数据视图">${icon("dataView")}</button>
            <button aria-label="布局视图">${icon("layoutView")}</button>
            <span class="rule"></span>
            <button aria-label="刷新">${icon("refresh")}</button>
            <button aria-label="暂停绘制">${icon("pause")}</button>
            <button aria-label="向左滚动">${icon("chevLeft")}</button>
            <div class="htrack"><div class="thumb"></div></div>
          </div>
        </main>

        <aside class="dock">
          ${DOCK.map(
            (g) => html`<div class="tabs">
              ${g.map(
                (t) => html`<button class=${classMap({ tab: true, latin: /^\w+$/.test(t.text) })}>${icon(t.name)}${t.text}</button>`
              )}
            </div>`
          )}
        </aside>
      </div>

      <footer class="status">
        <span class="cell wide"></span>
        <span class="cell slim"></span>
        <span class="cell coords">108.382  30.947 十进制度</span>
      </footer>

      <span class="watermark">https://blog.csdn.net/qq_39798423</span>
      <div class="meter">
        <div class="rates">
          <span class="rate">${icon("up")}<span>0</span><span>K/s</span></span>
          <span class="rate">${icon("down")}<span>0</span><span>K/s</span></span>
        </div>
        <div class="load">
          <svg viewBox="0 0 68 68" aria-hidden="true">
            <path d="M19 10A28.5 28.5 0 0 0 35 62.5" fill="none" stroke="#f9954f" stroke-width="3" stroke-linecap="round"></path>
          </svg>
          <span>41<small>%</small></span>
        </div>
      </div>
    `;
  }
}
